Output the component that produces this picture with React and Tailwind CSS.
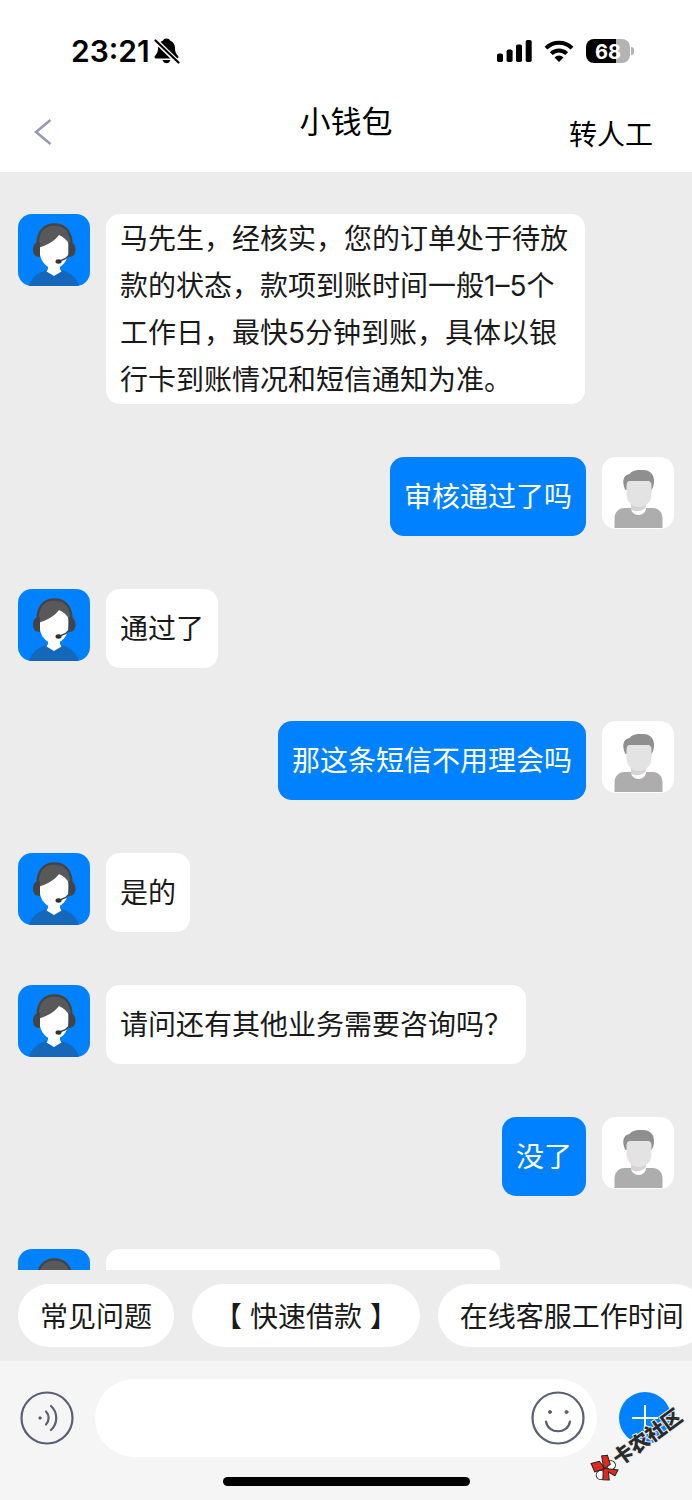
const messages = [
  { id: 1, from: "agent", text: "马先生，经核实，您的订单处于待放款的状态，款项到账时间一般1–5个工作日，最快5分钟到账，具体以银行卡到账情况和短信通知为准。" },
  { id: 2, from: "user", text: "审核通过了吗" },
  { id: 3, from: "agent", text: "通过了" },
  { id: 4, from: "user", text: "那这条短信不用理会吗" },
  { id: 5, from: "agent", text: "是的" },
  { id: 6, from: "agent", text: "请问还有其他业务需要咨询吗？" },
  { id: 7, from: "user", text: "没了" },
  { id: 8, from: "agent", text: "" },
];

const shortcuts = ["常见问题", "【 快速借款 】", "在线客服工作时间"];

function BellOff() {
  return (
    <svg viewBox="0 0 26 26" className="h-[26px] w-[26px]" aria-hidden="true">
      <path
        d="M12.500 0.500c2 0 3 .8 3.500 2 3.300 1.200 5 4 5 7.500 0 4.500 1.500 6 3 7.800.9 1 .4 2.700-1 2.700H2c-1.400 0-1.900-1.700-1-2.700C2.500 16 4 14.500 4 10c0-3.500 1.700-6.300 5-7.500.5-1.200 1.500-2 3.500-2z"
        fill="#000"
      />
      <path d="M8.500 22h8c-.6 2-2.200 3.300-4 3.300S9.100 24 8.500 22z" fill="#000" />
      <path d="M0 1L25 25.500" stroke="#fff" strokeWidth="5" />
      <path d="M1.500 2.500L24.500 24.500" stroke="#000" strokeWidth="2.200" strokeLinecap="round" />
    </svg>
  );
}

function Signal() {
  return (
    <svg viewBox="0 0 35 22" className="h-[22px] w-[35px]" aria-hidden="true">
      <rect x="0" y="13.500" width="6" height="8.500" rx="1.800" />
      <rect x="9.600" y="9.500" width="6" height="12.500" rx="1.800" />
      <rect x="19" y="4.500" width="6" height="17.500" rx="1.800" />
      <rect x="28.700" y="0" width="6" height="22" rx="1.800" />
    </svg>
  );
}

function Wifi() {
  return (
    <svg viewBox="0 0 30 22" className="h-[22px] w-[30px]" fill="none" stroke="#000" strokeWidth="4" aria-hidden="true">
      <path d="M2 8.200a18.500 18.500 0 0 1 26 0" />
      <path d="M7.300 13.600a11 11 0 0 1 15.400 0" />
      <path d="M15 22l-4.500-4.600a6.400 6.400 0 0 1 9 0z" fill="#000" stroke="none" />
    </svg>
  );
}

function Battery() {
  return (
    <div className="flex items-center gap-px">
      <div className="flex h-6 w-11 items-center justify-center rounded-lg bg-linear-to-r from-black from-68% to-[#b3b3b3] to-68% pt-px text-xl leading-6 font-bold text-white">
        68
      </div>
      <div className="h-2 w-[3px] rounded-r-full bg-[#b3b3b3]" />
    </div>
  );
}

function AgentAvatar() {
  return (
    <svg viewBox="0 0 72 72" className="h-[72px] w-[72px] shrink-0 rounded-[14px] bg-[#0081ff]" role="img" aria-label="客服">
      <path d="M11 72c2-8 8-12 13-14.500 2-.8 4-1.500 6-1.500h12c2 0 4 .7 6 1.500C53 60 59 64 61 72z" fill="#1568b9" />
      <path d="M30 50h12v5l1.500 2.500L36 62l-7.500-4.500L30 55z" fill="#fff" />
      <path d="M21.500 27C21.500 17 28 13 36 13s14.500 4 14.500 14v9c0 12-8 18.500-14.500 18.500S21.500 48 21.500 36z" fill="#fff" />
      <path d="M20 34C18 17 26 10 36.500 10S53.500 17 51.500 31c-2-4.500-6-8-10.500-10-4 5.500-11 10-21 13z" fill="#595959" />
      <path d="M19.500 31c0-13.500 6.500-20.500 17-20.500s17 7 17 20.500" fill="none" stroke="#444" strokeWidth="2.500" />
      <path d="M22 28v15c-5 0-7-3-7-7.500s2-7.500 7-7.500zM50.500 28v15c5 0 7-3 7-7.500s-2-7.500-7-7.500z" fill="#444" />
      <path d="M51 41.500c-2 2.500-4 4-8 5" fill="none" stroke="#444" strokeWidth="1.500" />
      <ellipse cx="40.500" cy="47.500" rx="3" ry="2.200" fill="#333" />
    </svg>
  );
}

function UserAvatar() {
  return (
    <svg viewBox="0 0 72 72" className="h-[72px] w-[72px] shrink-0 rounded-[14px] bg-white" role="img" aria-label="我">
      <path d="M12.500 71V62c0-7 4-11 10-11h28c6 0 10 4 10 11v9z" fill="#adadad" />
      <path d="M29 50h15v1c0 4-3.500 7-7.500 7s-7.500-3-7.500-7z" fill="#fff" />
      <path d="M29 46h15v4c-3 4-10 6-15 2.500z" fill="#d9d2d2" />
      <path d="M23.500 33c-3.500-6-3.500-15 4-16 2.500-3 5.500-4 9.500-4h4c7 0 11 4 11 11 0 4-1 7-2.500 9z" fill="#8f8f8f" />
      <path d="M24.500 29c0-3.500 1-5 4-5h17c3 0 4 1.500 4 5v8c0 8-6 13-12.500 13S24.500 45 24.500 37z" fill="#e3e3e3" />
    </svg>
  );
}

function Message({ from, text }) {
  const isUser = from === "user";

  return (
    <li className={isUser ? "flex flex-row-reverse gap-4" : "flex gap-4"}>
      {isUser ? <UserAvatar /> : <AgentAvatar />}
      <div
        className={
          isUser
            ? "flex min-h-[79px] max-w-[73%] items-center rounded-[14px] bg-[#0081ff] px-[14px] pt-0.5 text-white"
            : "flex min-h-[79px] max-w-[73%] items-center rounded-[14px] bg-white px-[14px] pt-0.5 text-[#1a1a1a]"
        }
      >
        {text ? <p>{text}</p> : <span className="w-[366px]" />}
      </div>
    </li>
  );
}

function Watermark() {
  return (
    <div className="pointer-events-none absolute right-0.5 bottom-[42px] flex w-[106px] -rotate-[36deg] items-center text-xl leading-6 font-black text-[#2b2b2b]">
      <svg viewBox="0 0 26 26" className="h-[26px] w-[26px] shrink-0" stroke="#222" strokeWidth="1" aria-hidden="true">
        <circle cx="6" cy="16" r="4.500" fill="#fff" />
        <circle cx="20" cy="14" r="4.500" fill="#fff" />
        <path d="M5 1l8 3 0 9-10-3zM23 4l-5-3-6 12 8 0zM12 12l-7 9 5 4 4-7 3 7 6-3z" fill="#e02a20" />
      </svg>
      <span className="whitespace-nowrap [paint-order:stroke] [-webkit-text-stroke:2px_#eee]">卡农社区</span>
    </div>
  );
}

export default function App() {
  return (
    <div
      lang="zh-CN"
      className="flex h-screen flex-col overflow-hidden bg-[#ececec] font-['Inter','Noto_Sans_CJK_SC',sans-serif] text-[28px] leading-[47px] font-normal"
    >
      <header className="shrink-0 bg-white text-black">
        <div className="flex h-24 items-center justify-between pt-[6px] pr-[58px] pl-[71px]">
          <div className="flex items-center gap-1">
            <span className="text-[30px] font-semibold">23:21</span>
            <BellOff />
          </div>
          <div className="flex items-center gap-3">
            <Signal />
            <Wifi />
            <Battery />
          </div>
        </div>

        <div className="grid h-[76px] grid-cols-3 px-[34px]">
          <button type="button" aria-label="返回" className="flex items-center justify-self-start pb-1">
            <svg viewBox="0 0 18 26" className="h-[26px] w-[18px]" fill="none" stroke="#9897b0" strokeWidth="2.500">
              <path d="M16.500 1L2 13l14.500 12" />
            </svg>
          </button>
          <h1 className="h-[52px] text-center text-[31px] leading-[52px]">小钱包</h1>
          <button type="button" className="justify-self-end pt-0.5 pr-[5px]">转人工</button>
        </div>
      </header>

      <main className="min-h-0 flex-1 overflow-hidden px-[18px] pt-[42px]">
        <ul className="flex flex-col gap-[53px]">
          {messages.map((m) => (
            <Message key={m.id} from={m.from} text={m.text} />
          ))}
        </ul>
      </main>

      <div className="flex shrink-0 gap-[18px] overflow-hidden px-[18px] py-[14px] text-[#1a1a1a]">
        {shortcuts.map((s) => (
          <button key={s} type="button" className="h-[63px] shrink-0 rounded-full bg-white px-[22px] pt-1 whitespace-nowrap">
            {s}
          </button>
        ))}
      </div>

      <footer className="relative shrink-0 bg-[#f5f5f5] pt-[18px] pb-[14px]">
        <div className="flex items-center gap-[21px] px-5">
          <button type="button" aria-label="语音" className="shrink-0">
            <svg viewBox="0 0 54 54" className="h-[54px] w-[54px]" fill="none" stroke="#5c5e72" strokeWidth="2.200" strokeLinecap="round">
              <circle cx="27" cy="27" r="25.500" />
              <circle cx="20" cy="27" r="1.200" fill="#5c5e72" strokeWidth="1" />
              <path d="M26 20.500c3.500 3.500 3.500 9.500 0 13M31 15c7 6.500 7 17.500 0 24" />
            </svg>
          </button>
          <div className="flex h-[78px] min-w-0 flex-1 items-center rounded-full bg-white pr-3 pl-8">
            <input type="text" aria-label="输入消息" className="min-w-0 flex-1 bg-transparent outline-none" />
            <button type="button" aria-label="表情" className="shrink-0">
              <svg viewBox="0 0 54 54" className="h-[54px] w-[54px]" fill="none" stroke="#5c5e72" strokeWidth="2.200" strokeLinecap="round">
                <circle cx="27" cy="27" r="25.500" />
                <path d="M15 30.500c2 13 22 13 24 0" />
                <circle cx="19" cy="21" r="1.500" fill="#5c5e72" strokeWidth="1" />
                <circle cx="35.500" cy="21" r="1.500" fill="#5c5e72" strokeWidth="1" />
              </svg>
            </button>
          </div>
          <button type="button" aria-label="更多" className="shrink-0">
            <svg viewBox="0 0 54 54" className="h-[54px] w-[54px]" fill="none" stroke="#fff" strokeWidth="2">
              <circle cx="27" cy="27" r="26" fill="#0081ff" stroke="none" />
              <path d="M27 14v26M14 27h26" />
            </svg>
          </button>
        </div>
        <div className="mx-auto mt-5 h-[9px] w-[247px] rounded-full bg-black" />
        <Watermark />
      </footer>
    </div>
  );
}
